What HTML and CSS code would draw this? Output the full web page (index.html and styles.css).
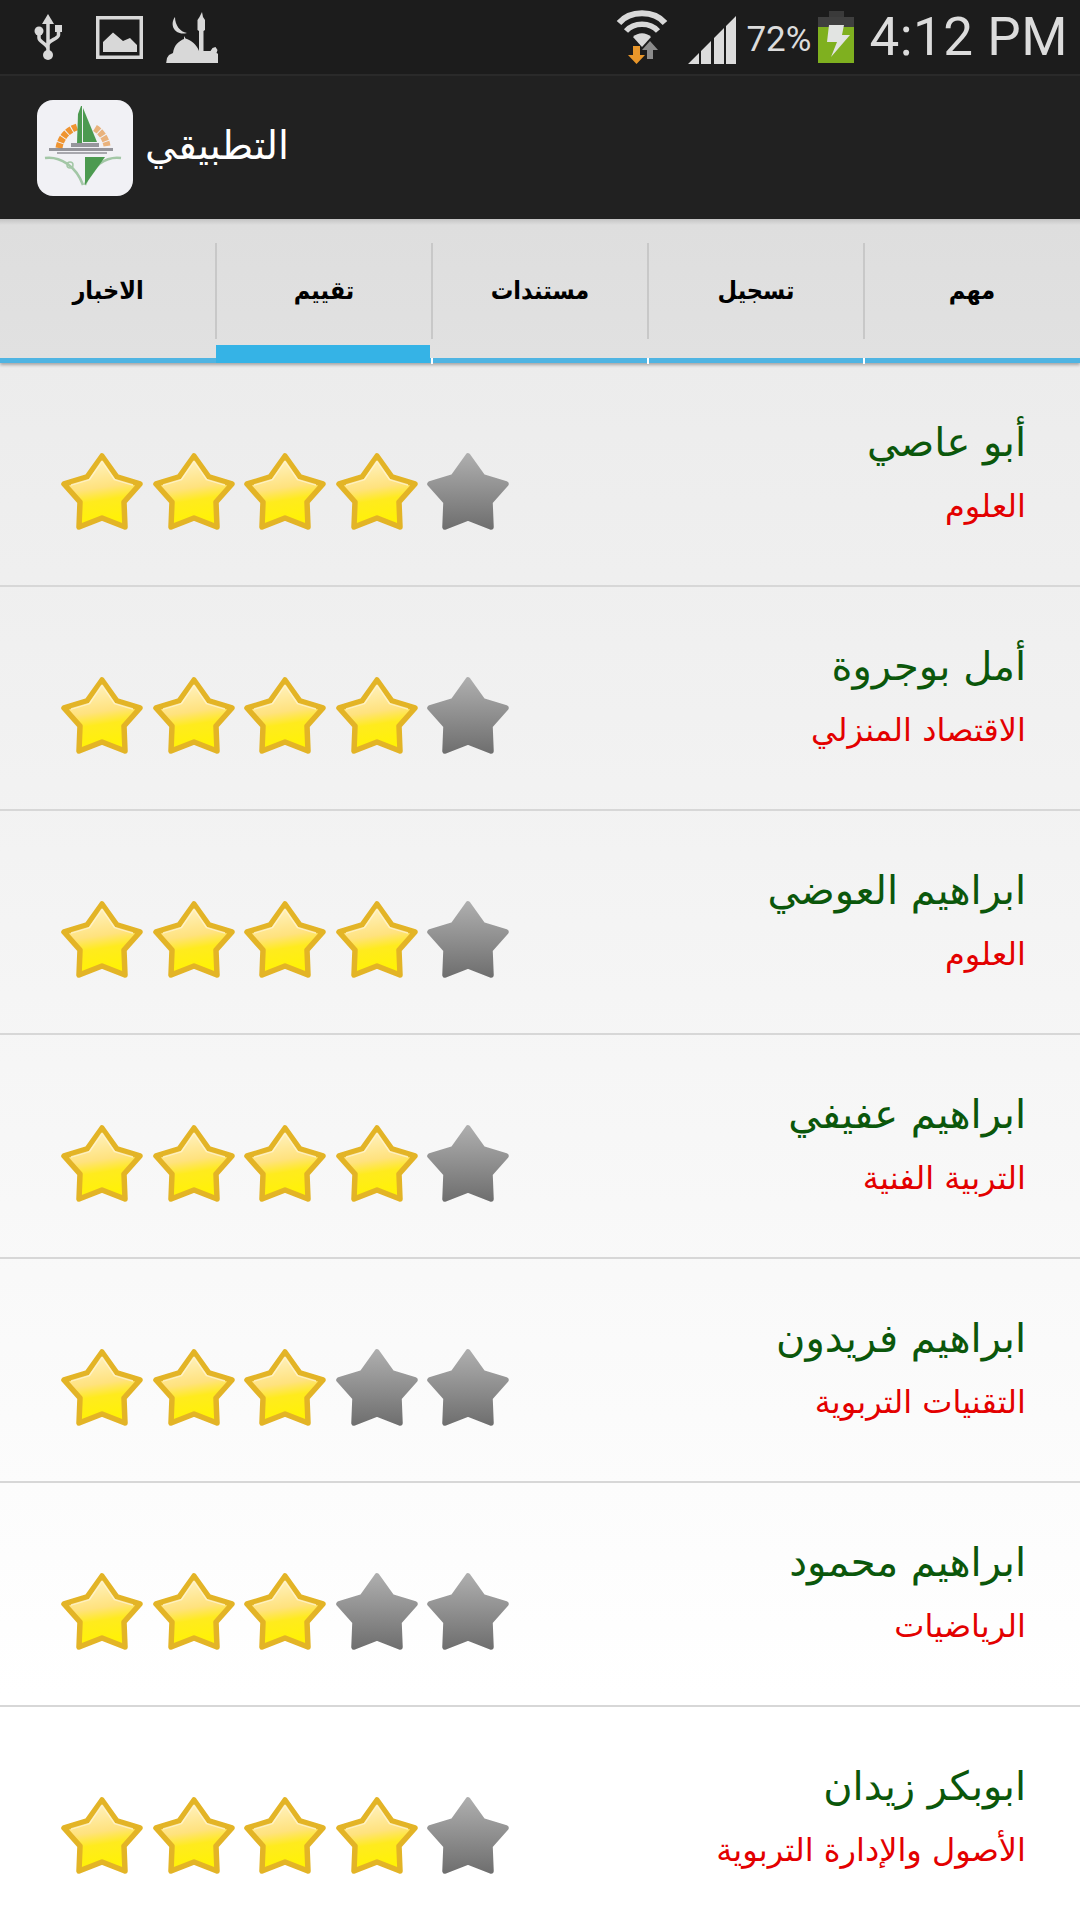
FILE: index.html
```html
<!DOCTYPE html>
<html lang="ar">
<head>
<meta charset="utf-8">
<title>التطبيقي</title>
<link rel="stylesheet" href="styles.css">
</head>
<body>
<svg class="defs" width="0" height="0" aria-hidden="true">
  <defs>
    <linearGradient id="goldFill" x1=".42" y1="0" x2=".58" y2="1">
      <stop offset="0" stop-color="#fff4c8"/>
      <stop offset=".44" stop-color="#ffe27e"/>
      <stop offset=".54" stop-color="#ffe748"/>
      <stop offset=".62" stop-color="#ffeb1e"/>
      <stop offset="1" stop-color="#fff400"/>
    </linearGradient>
    <linearGradient id="greyFill" gradientUnits="userSpaceOnUse" x1="0" y1="0" x2="0" y2="80">
      <stop offset="0" stop-color="#b0b0b0"/>
      <stop offset="1" stop-color="#6c6c6c"/>
    </linearGradient>
    <symbol id="starOn" viewBox="0 0 82 80">
      <path d="M41 4 L56 25 L79 32 L63 50 L64 75 L41 66 L18 75 L19 50 L3 32 L26 25 Z" fill="url(#goldFill)" stroke="#e3b426" stroke-width="5.500" stroke-linejoin="round"/>
      <path d="M41 9 L53.500 27.500 L72 33" fill="none" stroke="#fff6d4" stroke-width="1.500" stroke-opacity=".75" stroke-linejoin="round"/>
      <path d="M41 9 L28.500 27.500 L10 33" fill="none" stroke="#fff6d4" stroke-width="1.500" stroke-opacity=".75" stroke-linejoin="round"/>
    </symbol>
    <symbol id="starOff" viewBox="0 0 82 80">
      <path d="M41 4 L56 25 L79 32 L63 50 L64 75 L41 66 L18 75 L19 50 L3 32 L26 25 Z" fill="url(#greyFill)" stroke="url(#greyFill)" stroke-width="5.500" stroke-linejoin="round"/>
    </symbol>
  </defs>
</svg>
<div class="screen">
  <header class="status">
    <div class="status-left">
      <svg class="ic-usb" viewBox="0 0 28 46">
        <path d="M14 0l6 10H8z" fill="#d8d8d8"/>
        <path d="M14 8v30M5 19v5c0 4 9 6 9 11M24.500 16v5c0 4-10.500 5-10.500 10" fill="none" stroke="#d8d8d8" stroke-width="3.500"/>
        <circle cx="5" cy="17" r="4.500" fill="#d8d8d8"/>
        <rect x="21" y="11" width="7" height="7" fill="#d8d8d8"/>
        <circle cx="14" cy="41" r="5" fill="#d8d8d8"/>
      </svg>
      <svg class="ic-pic" viewBox="0 0 47 43">
        <rect x="1.750" y="1.750" width="43.500" height="39.500" fill="none" stroke="#d8d8d8" stroke-width="3.500"/>
        <path d="M7 26L17 16.500L27 25L34 22L41 29V36H7z" fill="#d8d8d8"/>
      </svg>
      <svg class="ic-mosque" viewBox="0 0 52 51">
        <path d="M9 5C3 13 9 24 21 21C14 20 9 13 9 5z" fill="#d8d8d8"/>
        <path d="M36 0l1 5 2 3v10l-1.500 1v20h7l2-3 3-1 2 3-1 3 2 1v10H0l1-6 2-3 4-2C8 33 13 29 18 27v-3l1.500 2.500C25 28 31 33 33 39V19l-1.500-1V8l2-3z" fill="#d8d8d8"/>
      </svg>
    </div>
    <div class="status-right">
      <svg class="ic-wifi" viewBox="0 0 54 56">
        <path d="M4 14C15 1 39 1 50 14" fill="none" stroke="#d8d8d8" stroke-width="6"/>
        <path d="M11 22C19 13 35 13 43 22" fill="none" stroke="#d8d8d8" stroke-width="5.500"/>
        <path d="M18 28C23 23 31 23 36 28L27 38z" fill="#d8d8d8"/>
        <path d="M35 32l8 9h-5v9h-6V41h-5z" fill="#8b8b8b"/>
        <path d="M18 37h7v9h5L21.500 55 13 46h5z" fill="#e8962a"/>
      </svg>
      <svg class="ic-signal" viewBox="0 0 48 48"><path d="M0 48L11 37V48z M13 48V35l10-10V48z M26 48V22l10-10V48z M38 48V10l10-10V48z" fill="#dcdcdc"/></svg>
      <span class="pct">72%</span>
      <svg class="ic-batt" viewBox="0 0 36 52">
        <rect x="11" y="0" width="15" height="6" fill="#3a3a3a"/>
        <rect x="0" y="6" width="36" height="10" fill="#3f3f3f"/>
        <rect x="0" y="16" width="36" height="36" fill="#7fb01f"/>
        <path d="M11 14H26L24 24H32L13 46L19 31H9z" fill="#e2e4e2"/>
      </svg>
      <span class="clock">4:12 PM</span>
    </div>
  </header>
  <div class="appbar">
    <svg class="logo" viewBox="0 0 96 96">
      <rect width="96" height="96" rx="16" fill="#f1f1f5"/>
      <path d="M22 48a26 26 0 0 1 18-21" fill="none" stroke="#ef9431" stroke-width="7" stroke-dasharray="5 1"/>
      <path d="M58 28a26 26 0 0 1 12 18" fill="none" stroke="#e9b27c" stroke-width="7" stroke-dasharray="5 1"/>
      <path d="M41 14l3-8 1 0v37h-5z" fill="#4c9a50"/>
      <path d="M46 8l14 34H46z" fill="#4c9a50"/>
      <rect x="34" y="43" width="28" height="4" fill="#77777e" opacity=".75"/>
      <rect x="12" y="48" width="64" height="3" fill="#6c6c73" opacity=".7"/>
      <rect x="20" y="52" width="50" height="2" fill="#6c6c73" opacity=".55"/>
      <path d="M8 58c15-2 31 8 38 27" fill="none" stroke="#a3c7a6" stroke-width="2.500"/>
      <path d="M84 58c-15-2-30 8-36 27" fill="none" stroke="#a3c7a6" stroke-width="2.500"/>
      <path d="M48 57h20L48 85z" fill="#4c9a50"/>
      <circle cx="33" cy="65" r="3" fill="none" stroke="#a3c7a6" stroke-width="1.500"/>
    </svg>
    <span class="app-title">التطبيقي</span>
  </div>
  <nav class="tabs">
    <div class="tab">مهم</div>
    <div class="tab">تسجيل</div>
    <div class="tab">مستندات</div>
    <div class="tab active">تقييم</div>
    <div class="tab">الاخبار</div>
  </nav>
  <main class="list">
    <section class="row"><div class="who"><div class="name">أبو عاصي</div><div class="dept">العلوم</div></div><div class="stars"><svg class="star"><use href="#starOn"/></svg><svg class="star"><use href="#starOn"/></svg><svg class="star"><use href="#starOn"/></svg><svg class="star"><use href="#starOn"/></svg><svg class="star"><use href="#starOff"/></svg></div></section>
    <section class="row"><div class="who"><div class="name">أمل بوجروة</div><div class="dept">الاقتصاد المنزلي</div></div><div class="stars"><svg class="star"><use href="#starOn"/></svg><svg class="star"><use href="#starOn"/></svg><svg class="star"><use href="#starOn"/></svg><svg class="star"><use href="#starOn"/></svg><svg class="star"><use href="#starOff"/></svg></div></section>
    <section class="row"><div class="who"><div class="name">ابراهيم العوضي</div><div class="dept">العلوم</div></div><div class="stars"><svg class="star"><use href="#starOn"/></svg><svg class="star"><use href="#starOn"/></svg><svg class="star"><use href="#starOn"/></svg><svg class="star"><use href="#starOn"/></svg><svg class="star"><use href="#starOff"/></svg></div></section>
    <section class="row"><div class="who"><div class="name">ابراهيم عفيفي</div><div class="dept">التربية الفنية</div></div><div class="stars"><svg class="star"><use href="#starOn"/></svg><svg class="star"><use href="#starOn"/></svg><svg class="star"><use href="#starOn"/></svg><svg class="star"><use href="#starOn"/></svg><svg class="star"><use href="#starOff"/></svg></div></section>
    <section class="row"><div class="who"><div class="name">ابراهيم فريدون</div><div class="dept">التقنيات التربوية</div></div><div class="stars"><svg class="star"><use href="#starOn"/></svg><svg class="star"><use href="#starOn"/></svg><svg class="star"><use href="#starOn"/></svg><svg class="star"><use href="#starOff"/></svg><svg class="star"><use href="#starOff"/></svg></div></section>
    <section class="row"><div class="who"><div class="name">ابراهيم محمود</div><div class="dept">الرياضيات</div></div><div class="stars"><svg class="star"><use href="#starOn"/></svg><svg class="star"><use href="#starOn"/></svg><svg class="star"><use href="#starOn"/></svg><svg class="star"><use href="#starOff"/></svg><svg class="star"><use href="#starOff"/></svg></div></section>
    <section class="row"><div class="who"><div class="name">ابوبكر زيدان</div><div class="dept">الأصول والإدارة التربوية</div></div><div class="stars"><svg class="star"><use href="#starOn"/></svg><svg class="star"><use href="#starOn"/></svg><svg class="star"><use href="#starOn"/></svg><svg class="star"><use href="#starOn"/></svg><svg class="star"><use href="#starOff"/></svg></div></section>
  </main>
</div>
</body>
</html>
```
FILE: styles.css
```css
* { box-sizing: border-box; }
html, body { margin: 0; padding: 0; }
body { width: 1080px; height: 1920px; overflow: hidden; font-family: "DejaVu Sans", sans-serif; background: #fff; }
.defs { display: block; height: 0; }
.screen { width: 1080px; height: 1920px; display: flex; flex-direction: column; overflow: hidden; }

.status { height: 76px; flex: none; background: #1c1c1c; border-bottom: 2px solid #2a2a2a; display: flex; justify-content: space-between; align-items: center; }
.status-left { display: flex; align-items: center; padding-left: 34px; }
.ic-usb { width: 28px; height: 46px; }
.ic-pic { width: 47px; height: 43px; margin-left: 34px; }
.ic-mosque { width: 52px; height: 51px; margin-left: 23px; }
.status-right { display: flex; align-items: center; padding-right: 12px; }
.ic-wifi { width: 54px; height: 56px; }
.ic-signal { width: 48px; height: 48px; margin-left: 19px; margin-top: 6px; }
.pct { font-family: Roboto, sans-serif; font-size: 35px; color: #dcdcdc; margin-left: 10px; margin-top: 4px; }
.ic-batt { width: 36px; height: 52px; margin-left: 7px; }
.clock { font-family: Roboto, sans-serif; font-size: 53px; color: #dcdcdc; margin-left: 15px; letter-spacing: 0.5px; }

.appbar { height: 143px; flex: none; background: #212121; display: flex; align-items: center; padding-left: 37px; gap: 12px; }
.logo { width: 96px; height: 96px; flex: none; filter: blur(.6px); }
.app-title { font-size: 39.500px; color: #fff; direction: rtl; margin-top: -5px; }

.tabs { height: 144px; flex: none; display: flex; flex-direction: row-reverse; background: linear-gradient(#c4c4c4 0, #dedede 6px, #e1e1e1 100%); border-bottom: 5px solid #4fb4e2; box-shadow: 0 2px 3px rgba(0,0,0,.3); position: relative; }
.tab { width: 216px; flex: 1 1 0; display: flex; align-items: center; justify-content: center; font-family: "DejaVu Sans Condensed", "DejaVu Sans", sans-serif; font-stretch: condensed; font-size: 25px; font-weight: 700; color: #000; direction: rtl; position: relative; padding-top: 4px; }
.tab::before { content: ""; position: absolute; left: -1px; top: 24px; height: 96px; width: 2px; background: #c8c8c8; }
.tab:last-child::before { display: none; }
.tab::after { content: ""; position: absolute; left: -1px; bottom: -6px; height: 6px; width: 2px; background: #fff; }
.tab:last-child::after { display: none; }
.tab.active::after { left: 0; right: 2px; width: auto; bottom: -5px; height: 18px; background: #35b3e6; }

.list { flex: 1; background: linear-gradient(#ececec 0, #ffffff 85%); }
.row { height: 224px; border-bottom: 2px solid #d7d7d7; display: flex; flex-direction: row-reverse; justify-content: space-between; padding: 0 54px 0 61px; }
.row:last-child { border-bottom: 0; }
.who { direction: rtl; padding-top: 51px; }
.name { font-size: 40px; line-height: 56px; color: #0b570b; }
.dept { font-size: 32px; line-height: 48px; color: #e30000; margin-top: 12px; }
.stars { display: flex; gap: 9.500px; padding-top: 89px; align-items: flex-start; }
.star { width: 82px; height: 80px; display: block; filter: blur(.7px); }
```
